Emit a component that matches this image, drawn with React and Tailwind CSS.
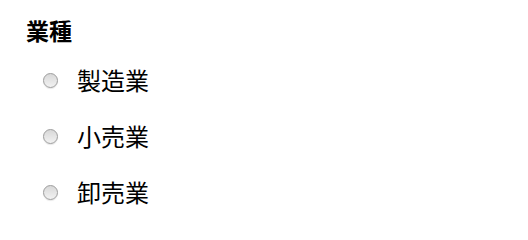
import React from "react";

const options = ["製造業", "小売業", "卸売業"];

export default function App() {
    return (
        <div
            className="w-[528px] h-[232px] bg-white text-black pl-[26px] pt-4"
            style={{ fontFamily: '"Noto Sans CJK JP", "Noto Sans", sans-serif' }}
        >
            <h2 className="text-[23px] font-bold leading-7">業種</h2>
            <div className="flex flex-col mt-5 gap-6 pl-[17px]">
                {options.map((label) => (
                    <label key={label} className="flex items-center gap-[19px] h-8">
                        <span className="w-[15px] h-[15px] rounded-full border border-[#9c9c9c] bg-gradient-to-b from-[#d8d8d8] to-[#f2f2f2] shadow-[0_1px_1px_rgba(0,0,0,0.1)]" />
                        <span className="text-[24px] leading-8">{label}</span>
                    </label>
                ))}
            </div>
        </div>
    );
}
